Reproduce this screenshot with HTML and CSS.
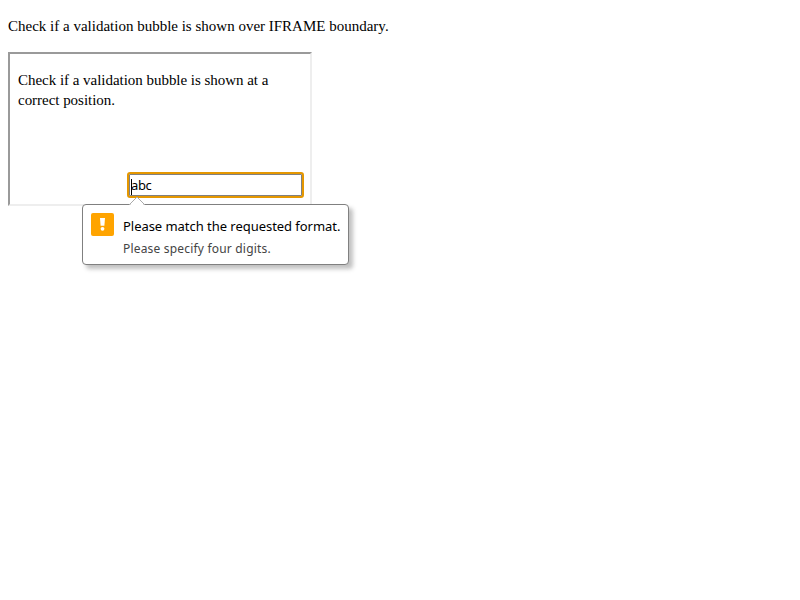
FILE: index.html
```
<!DOCTYPE html>
<html lang="en">
<head>
<meta charset="utf-8">
<title>Validation bubble</title>
<link rel="stylesheet" href="styles.css">
</head>
<body>
<p class="intro">Check if a validation bubble is shown over IFRAME boundary.</p>
<div class="frame">
  <p class="note">Check if a validation bubble is shown at a correct position.</p>
  <div class="field"><span class="caret"></span>abc</div>
  <div class="bubble">
    <svg class="arrow" width="18" height="10" viewBox="0 0 18 10"><path d="M1 10L9 1L17 10Z" fill="#fff"/><path d="M1 9L9 1L17 9" fill="none" stroke="#aaa"/></svg>
    <div class="icon"><svg width="23" height="23" viewBox="0 0 23 23"><path d="M9 5h5l-.6 7.8H9.6z" fill="#fff"/><circle cx="11.5" cy="15.8" r="1.9" fill="#fff"/></svg></div>
    <div class="text">
      <div class="message">Please match the requested format.</div>
      <div class="hint">Please specify four digits.</div>
    </div>
  </div>
</div>
</body>
</html>
```
FILE: styles.css
```
body {
  box-sizing: border-box;
  min-height: 600px;
  margin: 0;
  padding: 0 8px;
  display: flow-root;
  background: #fff;
  color: #000;
  font: 15px/20px "Liberation Serif", serif;
}
.intro { margin: 16px 0; }
.frame {
  position: relative;
  box-sizing: border-box;
  width: 304px;
  height: 154px;
  padding: 0 8px;
  border: 2px solid;
  border-color: #9a9a9a #eee #eee #9a9a9a;
}
.note { margin: 16px 0 0; letter-spacing: -.03px; }
.field {
  box-sizing: border-box;
  width: 177px;
  height: 26px;
  margin: 62px 0 0 109px;
  padding-left: 2px;
  border: 2px solid #e59700;
  border-radius: 3px;
  box-shadow: inset 0 0 0 1px #808080;
  font: 13px/22px "Noto Sans", sans-serif;
  letter-spacing: -.4px;
}
.caret {
  display: inline-block;
  width: 1px;
  height: 16px;
  margin-right: -1px;
  background: #000;
  vertical-align: middle;
}
.bubble {
  position: absolute;
  left: 72px;
  top: 150px;
  box-sizing: border-box;
  display: flex;
  width: 267px;
  height: 61px;
  padding: 8px;
  border: 1px solid #808080;
  border-radius: 4px;
  background: #fff;
  box-shadow: 4px 4px 4px rgba(100, 100, 100, .4);
  font: 13px/22px "Noto Sans", sans-serif;
}
.arrow { position: absolute; left: 45px; top: -9px; }
.icon {
  width: 23px;
  height: 23px;
  margin-right: 9px;
  border-radius: 2px;
  background: #ffa400;
}
.icon svg { display: block; }
.text { padding-top: 2px; white-space: nowrap; }
.message { letter-spacing: -.04px; }
.hint { color: #444; font-size: 12px; line-height: 24px; letter-spacing: .19px; }
```
